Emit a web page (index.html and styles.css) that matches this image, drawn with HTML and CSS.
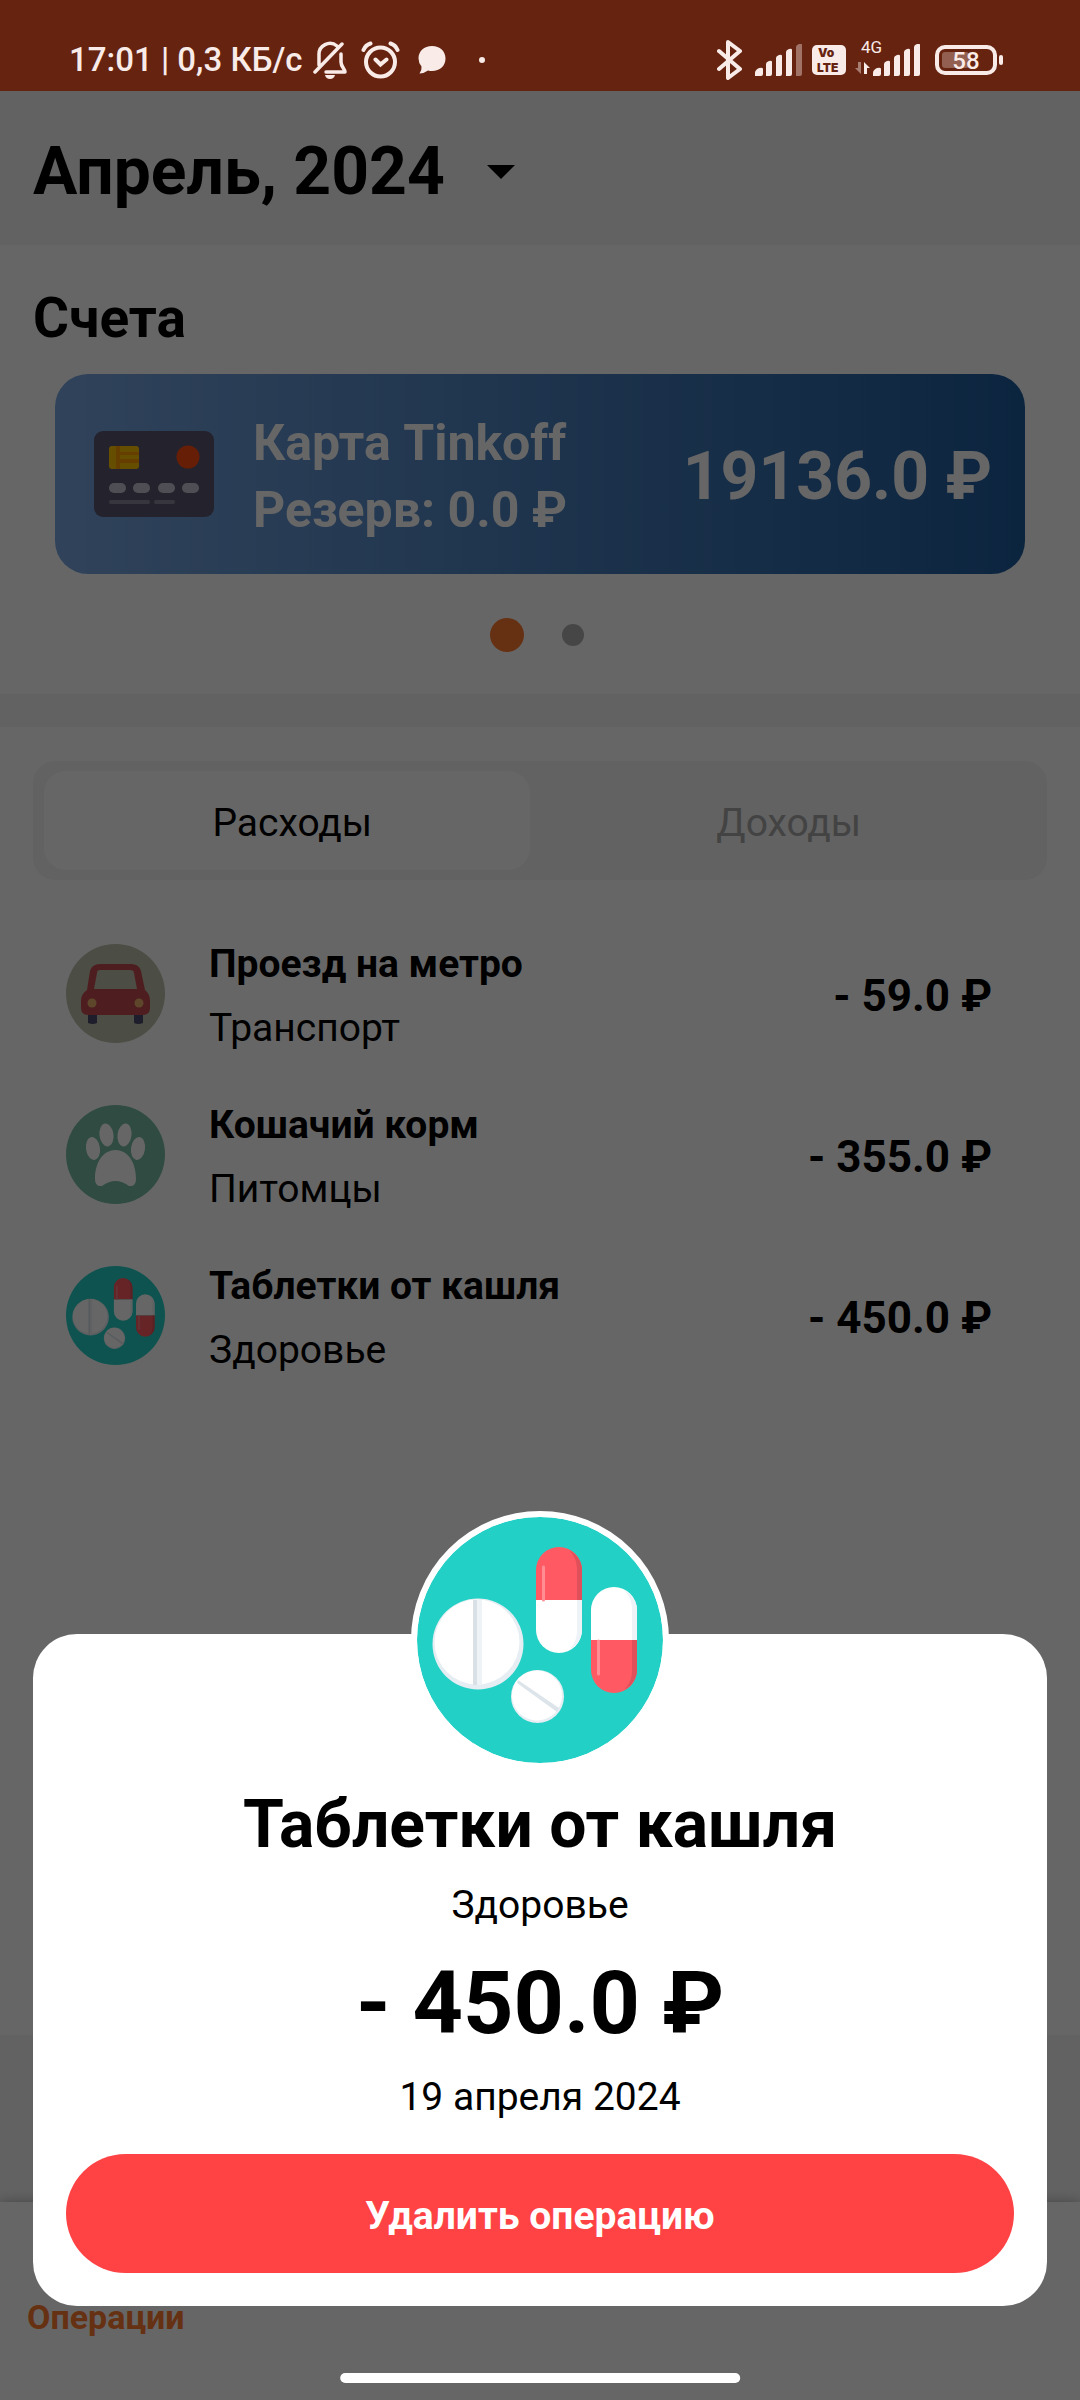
FILE: index.html
```html
<!DOCTYPE html>
<html lang="ru">
<head>
<meta charset="utf-8">
<meta name="viewport" content="width=device-width, initial-scale=1">
<title>Операции</title>
<link rel="stylesheet" href="styles.css">
</head>
<body>
<svg class="defs" aria-hidden="true">
  <symbol id="pills" viewBox="0 0 246 246">
    <circle cx="123" cy="123" r="123" fill="#23d0c5"/>
    <circle cx="61" cy="127" r="45.500" fill="#e6eef3"/>
    <circle cx="60" cy="125" r="42.500" fill="#fff"/>
    <path d="M56 83h9v85h-9z" fill="#edf3f7"/>
    <path d="M56 83h4v85h-4z" fill="#d9e1e6"/>
    <circle cx="120.500" cy="179.500" r="26.500" fill="#e6eef3"/>
    <circle cx="120" cy="178.500" r="25" fill="#fff"/>
    <path d="M101 163l41 28-2 4-40-29z" fill="#dde5ea"/>
    <path d="M119 83V53a23 23 0 0 1 46 0v30z" fill="#ff5a63"/>
    <path d="M160 83V53c0-9-3-15-8-20 8 4 13 12 13 20v30z" fill="#e0505a"/>
    <path d="M119 83v30a23 23 0 0 0 46 0V83z" fill="#fff"/>
    <path d="M160 83v30c0 9-3 15-8 20 8-4 13-12 13-20V83z" fill="#edf3f7"/>
    <path d="M126.500 50v33" stroke="#ff8d93" stroke-width="3" stroke-linecap="round"/>
    <path d="M174 123V93a23 23 0 0 1 46 0v30z" fill="#fff"/>
    <path d="M215 123V93c0-9-3-15-8-20 8 4 13 12 13 20v30z" fill="#edf3f7"/>
    <path d="M174 123v30a23 23 0 0 0 46 0v-30z" fill="#ff5a63"/>
    <path d="M215 123v30c0 9-3 15-8 20 8-4 13-12 13-20v-30z" fill="#e0505a"/>
    <path d="M181.500 124v33" stroke="#ff8d93" stroke-width="3" stroke-linecap="round"/>
  </symbol>
  <symbol id="signal" viewBox="0 0 48 32">
    <path d="M0 32v-3q0-3 4-5 4-1 4 1v5q0 2-2 2zM11 32V20q0-2 3-3 3-1 3 1v12q0 2-2 2zM21 32V14q0-2 3-3 3-1 3 1v18q0 2-2 2zM31 32V8q0-2 3-3 3-1 3 1v24q0 2-2 2z"/>
  </symbol>
</svg>

<header class="status">
  <span class="status-text">17:01 | 0,3 КБ/с</span>
  <svg class="bell" width="34" height="38" viewBox="0 0 34 38" fill="none" stroke="currentColor" stroke-linecap="round" stroke-linejoin="round">
    <path d="M2 31L29 3M6 24V14a11 11 0 0 1 18-9M28 13v8c0 5 4 7 4 10H13" stroke-width="3.500"/>
    <path d="M12 34h10q-1 4-5 4t-5-4z" fill="currentColor" stroke="none"/>
  </svg>
  <svg class="alarm" width="39" height="38" viewBox="0 0 38 38" fill="none" stroke="currentColor" stroke-width="4" stroke-linecap="round">
    <circle cx="19" cy="21" r="14.500"/><path d="M2 9q2-5 7-6.500M36 9q-2-5-7-6.500M14 18.500l5 5 6-5"/>
  </svg>
  <svg class="bubble" width="28" height="28" viewBox="0 0 28 28" fill="currentColor"><path d="M14 0c8 0 13.500 5 13.500 12.500S22 25 14 25q-2 0-4-.5-4 3-8.500 3 2.500-3 2-7Q.5 17 .5 12.500C.5 5 6 0 14 0z"/></svg>
  <span class="status-dot"></span>
  <span class="status-space"></span>
  <svg width="26" height="40" viewBox="0 0 26 40" fill="none" stroke="currentColor" stroke-width="4" stroke-linecap="round" stroke-linejoin="round"><path d="M2 11l21 18-12 9V2l12 9L2 29"/></svg>
  <svg class="sig-one" width="48" height="32" fill="currentColor"><use href="#signal"/><path d="M41 32V3q0-2 3-3 3-1 3 1v29q0 2-2 2z" opacity=".4"/></svg>
  <svg class="volte" width="34" height="30" viewBox="0 0 34 30"><rect width="34" height="30" rx="5" fill="currentColor"/><text class="volte-text" x="6" y="12">Vo</text><text class="volte-text" x="5" y="27">LTE</text></svg>
  <svg class="sig-two" width="66" height="46" viewBox="0 -5 66 46" fill="currentColor">
    <text class="net-text" x="6" y="12">4G</text>
    <path d="M6 21v12L0 27h3v-6z" opacity=".45"/><path d="M9 33V21l6 6h-3v6z"/>
    <svg x="18" y="3" width="48" height="32"><use href="#signal"/><path d="M41 32V3q0-2 3-3 3-1 3 1v29q0 2-2 2z"/></svg>
  </svg>
  <svg class="battery" width="68" height="30" viewBox="0 0 68 30"><rect x="2" y="2" width="58" height="26" rx="8" fill="none" stroke="currentColor" stroke-width="4"/><rect x="7" y="7" width="27" height="16" rx="3" fill="currentColor" opacity=".3"/><rect x="64" y="10" width="4" height="10" rx="2" fill="currentColor"/><text class="battery-text" x="31" y="24" text-anchor="middle">58</text></svg>
</header>

<main class="app">
  <div class="month">
    <h1 class="month-title">Апрель, 2024</h1>
    <button class="month-btn" type="button" aria-label="Выбрать месяц"><svg width="28" height="14" viewBox="0 0 28 14"><path d="M0 0h28L14 14z"/></svg></button>
  </div>

  <section class="accounts">
    <h2 class="accounts-title">Счета</h2>
    <article class="card">
      <svg width="120" height="86" viewBox="0 0 120 86">
        <rect width="120" height="86" rx="9" fill="#5a5770"/>
        <rect x="15" y="15" width="30" height="23" rx="3" fill="#ffc400"/>
        <path d="M22 15h4v23h-4zM26 21h19v3H26zM26 28h19v4H26z" fill="#ff9f00"/>
        <circle cx="94" cy="26" r="11.500" fill="#ff4c10"/>
        <g fill="#c4c4d2"><rect x="15" y="52" width="17" height="10" rx="5"/><rect x="39" y="52" width="17" height="10" rx="5"/><rect x="64" y="52" width="17" height="10" rx="5"/><rect x="88" y="52" width="17" height="10" rx="5"/></g>
        <path d="M17 71h37M62 71h17" stroke="#8a879c" stroke-width="4" stroke-linecap="round"/>
      </svg>
      <div class="card-text"><p>Карта Tinkoff</p><p>Резерв: 0.0 ₽</p></div>
      <strong class="card-sum">19136.0 ₽</strong>
    </article>
    <div class="pager"><span class="page-dot page-dot-on"></span><span class="page-dot"></span></div>
  </section>

  <section class="operations">
    <div class="tabs" role="tablist">
      <button class="tab tab-on" type="button" role="tab" aria-selected="true">Расходы</button>
      <button class="tab" type="button" role="tab" aria-selected="false">Доходы</button>
    </div>
    <ul class="list">
      <li class="row">
        <svg class="row-icon" viewBox="0 0 99 99">
          <circle cx="49.500" cy="49.500" r="49.500" fill="#bec0ab"/>
          <path d="M22 70h9v9q-4 2-9 0zM68 70h9v9q-5 2-9 0z" fill="#4c4a6b"/>
          <path d="M34 20h31q8 0 10 7l4 19q5 4 5 11v7q0 7-7 7H22q-7 0-7-7v-7q0-7 6-11l3-19q2-7 10-7zm0 6q-3 0-3 3l-3 16h43l-3-16q0-3-4-3z" fill="#c44a50" fill-rule="evenodd"/>
          <circle cx="26" cy="59" r="4.500" fill="#eab06a"/><circle cx="73" cy="59" r="4.500" fill="#eab06a"/>
        </svg>
        <div class="row-text"><h3 class="row-title">Проезд на метро</h3><p class="row-sub">Транспорт</p></div>
        <span class="row-sum">- 59.0 ₽</span>
      </li>
      <li class="row">
        <svg class="row-icon" viewBox="0 0 99 99">
          <circle cx="49.500" cy="49.500" r="49.500" fill="#76bca5"/>
          <g fill="#fff"><ellipse cx="27" cy="43.500" rx="7" ry="11.500" transform="rotate(-8 27 43.500)"/><ellipse cx="40.500" cy="30" rx="7" ry="11.500" transform="rotate(-8 40.500 30)"/><ellipse cx="58.500" cy="30" rx="7" ry="11.500" transform="rotate(8 58.500 30)"/><ellipse cx="72" cy="43.500" rx="7" ry="11.500" transform="rotate(8 72 43.500)"/>
          <path d="M49.500 45C61 45 70 56 70 74q0 8-7 7-7-5-13.500-5T36 81q-7 1-7-7c0-18 9-29 20.500-29z"/></g>
        </svg>
        <div class="row-text"><h3 class="row-title">Кошачий корм</h3><p class="row-sub">Питомцы</p></div>
        <span class="row-sum">- 355.0 ₽</span>
      </li>
      <li class="row">
        <svg class="row-icon"><use href="#pills"/></svg>
        <div class="row-text"><h3 class="row-title">Таблетки от кашля</h3><p class="row-sub">Здоровье</p></div>
        <span class="row-sum">- 450.0 ₽</span>
      </li>
    </ul>
  </section>

  <div class="spacer"></div>
  <nav class="nav"><a class="nav-link" href="#">Операции</a></nav>
</main>

<div class="scrim"></div>
<section class="sheet" role="dialog" aria-modal="true" aria-labelledby="sheet-title">
  <svg class="sheet-icon"><use href="#pills"/></svg>
  <h2 class="sheet-title" id="sheet-title">Таблетки от кашля</h2>
  <p class="sheet-category">Здоровье</p>
  <strong class="sheet-sum">- 450.0 ₽</strong>
  <p class="sheet-date">19 апреля 2024</p>
  <button class="delete" type="button">Удалить операцию</button>
</section>
<div class="home-bar"></div>
</body>
</html>
```
FILE: styles.css
```css
* { box-sizing: border-box; margin: 0; padding: 0; }

body {
  display: flex;
  flex-direction: column;
  min-height: 100vh;
  background: #fff;
  color: #000;
  font-family: Roboto, "Liberation Sans", sans-serif;
}

button { border: 0; background: none; font: inherit; color: inherit; }
svg { display: block; flex: none; }
.defs { position: absolute; width: 0; height: 0; }

/* System status bar, drawn above the scrim */
.status {
  position: relative;
  z-index: 2;
  display: flex;
  align-items: center;
  height: 91px;
  padding: 28px 77px 0 69px;
  background: #662310;
  color: #f8ebe8;
}
.status-text { font-size: 33px; line-height: 40px; font-weight: 500; white-space: nowrap; }
.bell { margin-left: 10px; }
.alarm { margin-left: 14px; }
.bubble { margin-left: 18px; }
.status-dot { width: 6px; height: 6px; margin-left: 33px; border-radius: 50%; background: currentColor; }
.status-space { flex: 1; }
.sig-one { margin-left: 12px; }
.volte { margin-left: 9px; }
.sig-two { margin-left: 9px; margin-bottom: 2px; }
.battery { margin-left: 14px; }
.volte-text { font: 900 12px Inter, sans-serif; fill: #662310; }
.net-text { font: 400 17px Roboto, sans-serif; }
.battery-text { font: 500 24px Roboto, sans-serif; fill: currentColor; }

.app { display: flex; flex-direction: column; flex: 1; }

.month {
  display: flex;
  align-items: center;
  gap: 42px;
  padding: 42px 33px 34px;
  background: #f5f5f5;
}
.month-title { font-size: 66px; line-height: 78px; font-weight: 700; }

.accounts { padding: 41px 33px 42px; border-bottom: 33px solid #f5f5f5; }
.accounts-title { font-size: 55px; line-height: 65px; font-weight: 700; }

.card {
  display: flex;
  align-items: center;
  gap: 39px;
  height: 200px;
  margin: 23px 22px 44px;
  padding: 0 33px 0 39px;
  border-radius: 33px;
  background: linear-gradient(90deg, #78a7e2, #1f5c9e);
  color: #fff;
}
.card-text { flex: 1; padding-top: 6px; font-size: 50px; line-height: 67px; font-weight: 700; white-space: nowrap; }
.card-sum { padding-top: 6px; font-size: 66px; line-height: 78px; white-space: nowrap; }

.pager { display: flex; align-items: center; justify-content: center; gap: 38px; height: 34px; padding-right: 6px; }
.page-dot { width: 22px; height: 22px; border-radius: 50%; background: #b0b0b0; }
.page-dot-on { width: 34px; height: 34px; background: #ff7b2f; }

.operations { flex: 1; padding: 34px 33px 0; }
.tabs {
  display: grid;
  grid-template-columns: 1fr 1fr;
  padding: 10px 10px 10px 11px;
  border-radius: 22px;
  background: #f5f5f5;
}
.tab {
  position: relative;
  z-index: 0;
  height: 99px;
  padding-top: 4px;
  font-size: 39px;
  color: #a8a8a8;
}
.tab-on { color: #000; }
.tab-on::before {
  content: "";
  position: absolute;
  z-index: -1;
  inset: 0 11px 0 0;
  border-radius: 22px;
  background: #fff;
}

.list { display: flex; flex-direction: column; gap: 33px; margin-top: 52px; padding: 0 55px 0 33px; list-style: none; }
.row { display: flex; align-items: center; gap: 44px; }
.row-icon { width: 99px; height: 99px; margin-bottom: 6px; }
.row-text { flex: 1; font-size: 39px; line-height: 64px; }
.row-title { font-size: 39px; font-weight: 700; }
.row-sum { font-size: 44px; font-weight: 700; white-space: nowrap; }

.spacer { height: 167px; background: #f5f5f5; }
.nav {
  height: 198px;
  padding: 95px 27px 0;
  background: #fff;
  box-shadow: 0 0 12px rgba(0, 0, 0, .3);
}
.nav-link { font-size: 34px; line-height: 40px; font-weight: 700; color: #ff7b2f; text-decoration: none; }

.scrim { position: fixed; inset: 0; z-index: 1; background: rgba(0, 0, 0, .6); }

.sheet {
  position: fixed;
  z-index: 2;
  left: 33px;
  right: 33px;
  bottom: 94px;
  display: flex;
  flex-direction: column;
  align-items: center;
  padding: 0 33px 33px;
  border-radius: 44px;
  background: #fff;
  text-align: center;
}
.sheet-icon {
  width: 258px;
  height: 258px;
  margin: -123px 0 17px;
  border: 6px solid #fff;
  border-radius: 50%;
  background: #fff;
}
.sheet-title { font-size: 66px; line-height: 78px; font-weight: 700; }
.sheet-category { margin: 15px 0 20px; font-size: 39px; line-height: 52px; }
.sheet-sum { font-size: 88px; line-height: 104px; font-weight: 700; }
.sheet-date { margin: 16px 0 31px; font-size: 39px; line-height: 52px; }
.delete {
  width: 100%;
  height: 119px;
  padding-top: 4px;
  border-radius: 60px;
  background: #ff4345;
  color: #fff;
  font-size: 39px;
  font-weight: 700;
}

.home-bar {
  position: fixed;
  z-index: 2;
  bottom: 17px;
  left: 50%;
  width: 37%;
  height: 10px;
  border-radius: 5px;
  background: #fff;
  transform: translateX(-50%);
}
```
